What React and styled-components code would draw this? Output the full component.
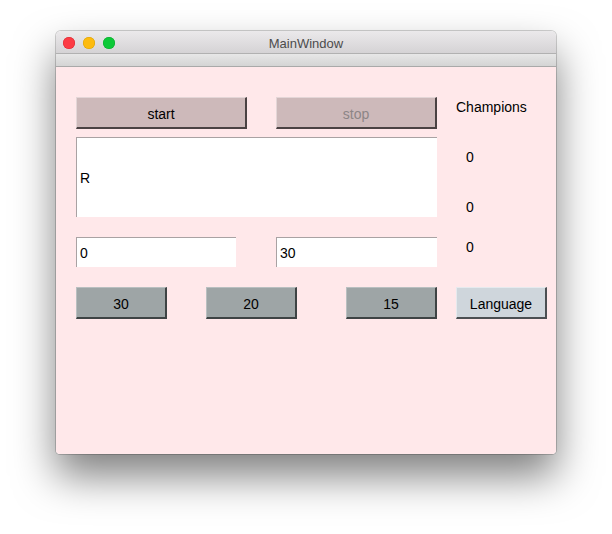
import React from "react";
import styled, { createGlobalStyle } from "styled-components";

const Global = createGlobalStyle`
  html, body { margin: 0; padding: 0; background: #ffffff; }
  body { font-family: "Liberation Sans", Arial, sans-serif; }
`;

const Page = styled.div`
  width: 612px;
  height: 534px;
  padding: 31px 0 0 56px;
  box-sizing: border-box;
`;

const Window = styled.div`
  width: 500px;
  height: 423px;
  border-radius: 5px 5px 4px 4px;
  overflow: hidden;
  display: flex;
  flex-direction: column;
  box-shadow: 0 0 0 1px rgba(0, 0, 0, 0.18), 0 22px 42px rgba(0, 0, 0, 0.5);
`;

const TitleBar = styled.div`
  height: 23px;
  box-sizing: border-box;
  padding-top: 2px;
  flex: none;
  position: relative;
  display: flex;
  align-items: center;
  justify-content: center;
  background: linear-gradient(#ebe9eb, #d5d3d5);
  border-bottom: 1px solid #b1b1b1;
  font-size: 13px;
  color: #4c4c4c;
`;

const Lights = styled.div`
  position: absolute;
  left: 7px;
  top: 6px;
  display: flex;
  gap: 8px;
`;

const Light = styled.span`
  width: 12px;
  height: 12px;
  border-radius: 50%;
  background: ${(p) => p.$c};
  box-shadow: inset 0 0 0 0.5px ${(p) => p.$b};
`;

const Strip = styled.div`
  height: 12px;
  flex: none;
  background: linear-gradient(#e7e7e7, #d4d4d4);
  border-bottom: 1px solid #a9a9a9;
`;

const Content = styled.div`
  flex: 1;
  background: #ffe8ea;
  padding: 30px 0 0 20px;
  display: flex;
  flex-direction: column;
  font-size: 14px;
  color: #000;
`;

const Row = styled.div`
  display: flex;
  align-items: flex-start;
  height: ${(p) => p.$h}px;
  margin-bottom: ${(p) => p.$mb || 0}px;
`;

const Button = styled.button`
  box-sizing: border-box;
  width: ${(p) => p.$w}px;
  height: 32px;
  margin-right: ${(p) => p.$mr || 0}px;
  padding: 2px 0 0 0;
  font-family: "Liberation Sans", Arial, sans-serif;
  font-size: 14px;
  color: ${(p) => (p.$disabled ? "#8c8586" : "#000")};
  background: ${(p) => p.$bg};
  border-style: solid;
  border-width: 1px 2px 2px 1px;
  border-color: ${(p) => p.$light} ${(p) => p.$dark} ${(p) => p.$dark} ${(p) => p.$light};
  display: flex;
  align-items: center;
  justify-content: center;
`;

const TextArea = styled.div`
  box-sizing: border-box;
  width: 361px;
  height: 80px;
  background: #fff;
  border-top: 1px solid #a9a2a3;
  border-left: 1px solid #a9a2a3;
  padding-left: 3px;
  display: flex;
  align-items: center;
  margin-right: 29px;
`;

const Input = styled.div`
  box-sizing: border-box;
  width: ${(p) => p.$w}px;
  height: 30px;
  margin-right: ${(p) => p.$mr || 0}px;
  background: #fff;
  border-top: 1px solid #a9a2a3;
  border-left: 1px solid #a9a2a3;
  padding-left: 3px;
  display: flex;
  align-items: center;
  padding-top: 1px;
`;

const Label = styled.div`
  line-height: 16px;
  margin-top: ${(p) => p.$mt || 0}px;
`;

const Stack = styled.div`
  display: flex;
  flex-direction: column;
`;

const pinkBtn = { $bg: "#cdb9ba", $light: "#e4d6d7", $dark: "#4a4243" };
const grayBtn = { $bg: "#9ea5a6", $light: "#b9bfc0", $dark: "#3e4344" };
const blueBtn = { $bg: "#cfd6dc", $light: "#e6eaee", $dark: "#4b4f52" };

export default function App() {
  return (
    <>
      <Global />
      <Page>
        <Window>
          <TitleBar>
            <Lights>
              <Light $c="#fc3b44" $b="#d9262f" />
              <Light $c="#fdbb0f" $b="#d9a000" />
              <Light $c="#0dc938" $b="#09a82b" />
            </Lights>
            MainWindow
          </TitleBar>
          <Strip />
          <Content>
            <Row $h={32} $mb={8}>
              <Button $w={171} $mr={29} {...pinkBtn}>start</Button>
              <Button $w={161} $mr={19} $disabled {...pinkBtn}>stop</Button>
              <Label $mt={2}>Champions</Label>
            </Row>
            <Row $h={80} $mb={20}>
              <TextArea>R</TextArea>
              <Stack>
                <Label $mt={12}>0</Label>
                <Label $mt={34}>0</Label>
              </Stack>
            </Row>
            <Row $h={30} $mb={20}>
              <Input $w={160} $mr={40}>0</Input>
              <Input $w={161} $mr={29}>30</Input>
              <Label $mt={2}>0</Label>
            </Row>
            <Row $h={32}>
              <Button $w={91} $mr={39} {...grayBtn}>30</Button>
              <Button $w={91} $mr={49} {...grayBtn}>20</Button>
              <Button $w={91} $mr={19} {...grayBtn}>15</Button>
              <Button $w={91} {...blueBtn}>Language</Button>
            </Row>
          </Content>
        </Window>
      </Page>
    </>
  );
}
